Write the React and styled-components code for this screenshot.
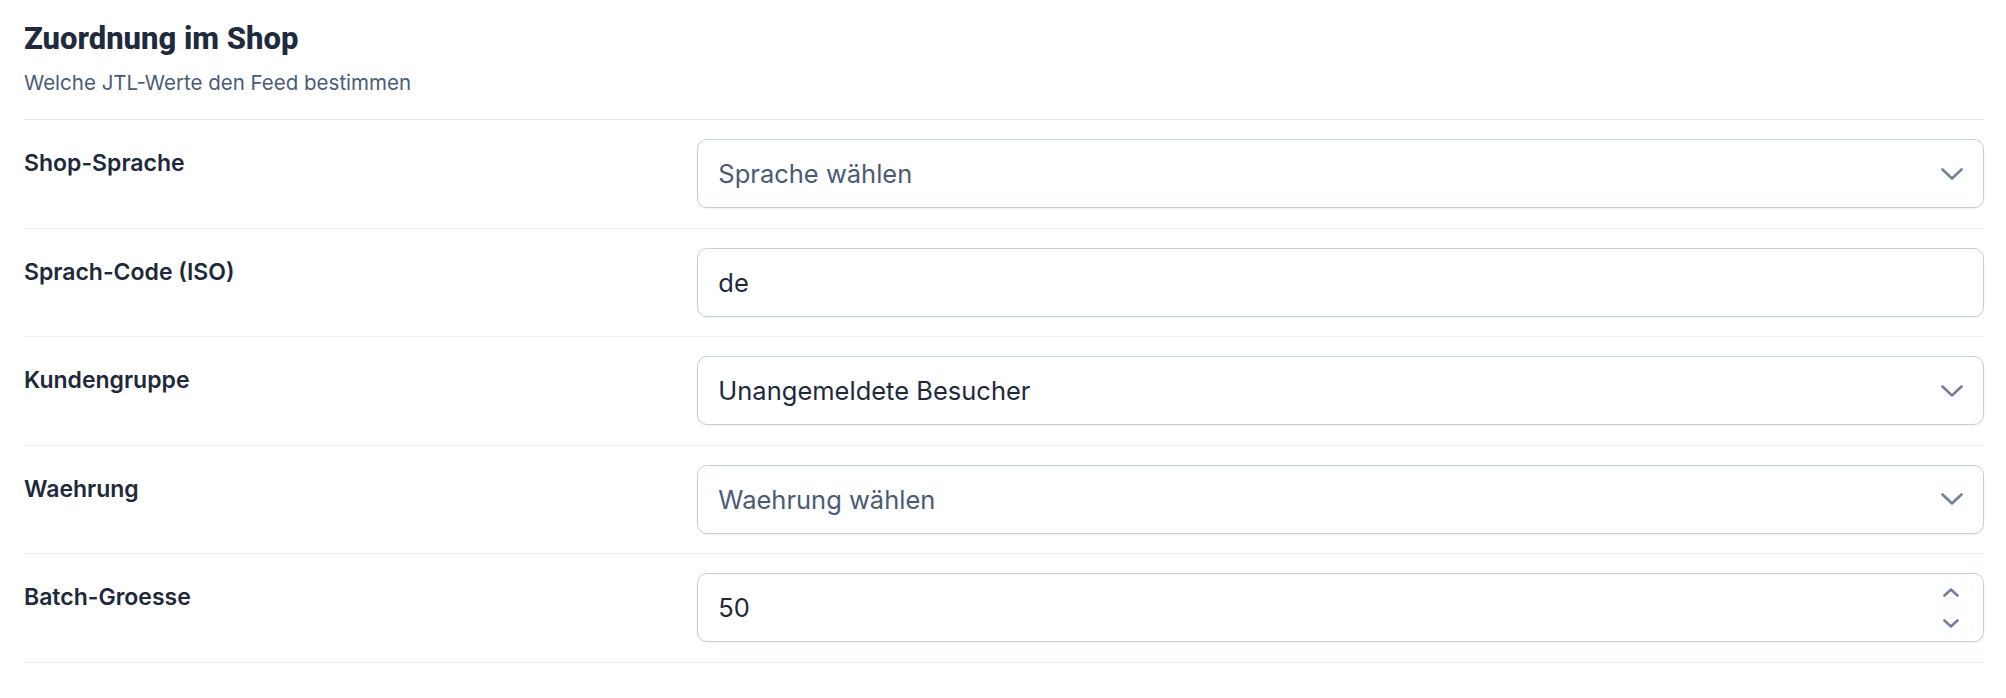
import React from "react";
import styled, { createGlobalStyle } from "styled-components";

const Global = createGlobalStyle`
  * { box-sizing: border-box; }
  html, body { margin: 0; padding: 0; background: #ffffff; }
  body { font-family: Inter, "Noto Sans", sans-serif; color: #1e293b; }
`;

const Page = styled.div`
  padding: 21px 22px 0 24px;
`;

const Header = styled.header`
  display: flex;
  flex-direction: column;
  gap: 12px;
  padding-bottom: 22px;
  border-bottom: 1px solid #e2e6ee;
`;

const Title = styled.h2`
  margin: 0;
  font-family: Roboto, "Open Sans", sans-serif;
  font-stretch: 93%;
  font-weight: 800;
  font-size: 31px;
  line-height: 36px;
  color: #1f2a3d;
`;

const Subtitle = styled.p`
  margin: 0;
  font-size: 20.5px;
  line-height: 28px;
  color: #4b5b76;
`;

const Row = styled.div`
  display: grid;
  grid-template-columns: minmax(0, 1fr) minmax(0, 2fr);
  column-gap: 30px;
  padding: 19px 0 19.5px;
  border-bottom: 1px solid #eef1f5;
`;

const Label = styled.label`
  padding-top: 8px;
  font-size: 23px;
  line-height: 33px;
  font-weight: 600;
  color: #1e293b;
`;

const Field = styled.div`
  display: flex;
  align-items: center;
  height: 69px;
  padding: 0 20px;
  border: 1px solid #c4cfdc;
  border-radius: 10px;
  background: #ffffff;
  box-shadow: 0 1px 2px rgba(15, 23, 42, 0.06);
`;

const Value = styled.span`
  flex: 1;
  font-size: 25.5px;
  color: ${(p) => (p.$placeholder ? "#4b5b76" : "#1e293b")};
  white-space: nowrap;
`;

const Spinner = styled.div`
  display: flex;
  flex-direction: column;
  align-items: center;
  gap: 22px;
  margin-right: 4px;
`;

const Chevron = ({ up = false, w = 22, h = 12 }) => (
  <svg width={w} height={h} viewBox={`0 0 ${w} ${h}`} fill="none">
    <polyline
      points={up ? `1.5,${h - 1.5} ${w / 2},1.5 ${w - 1.5},${h - 1.5}` : `1.5,1.5 ${w / 2},${h - 1.5} ${w - 1.5},1.5`}
      stroke="#718199"
      strokeWidth="2.6"
      strokeLinecap="round"
      strokeLinejoin="round"
    />
  </svg>
);

const rows = [
  { label: "Shop-Sprache", value: "Sprache wählen", kind: "select", placeholder: true },
  { label: "Sprach-Code (ISO)", value: "de", kind: "text" },
  { label: "Kundengruppe", value: "Unangemeldete Besucher", kind: "select" },
  { label: "Waehrung", value: "Waehrung wählen", kind: "select", placeholder: true },
  { label: "Batch-Groesse", value: "50", kind: "number" },
];

export default function App() {
  return (
    <>
      <Global />
      <Page>
        <Header>
          <Title>Zuordnung im Shop</Title>
          <Subtitle>Welche JTL-Werte den Feed bestimmen</Subtitle>
        </Header>
        {rows.map((r) => (
          <Row key={r.label}>
            <Label>{r.label}</Label>
            <Field>
              <Value $placeholder={r.placeholder}>{r.value}</Value>
              {r.kind === "select" && <Chevron />}
              {r.kind === "number" && (
                <Spinner>
                  <Chevron up w={16} h={9} />
                  <Chevron w={16} h={9} />
                </Spinner>
              )}
            </Field>
          </Row>
        ))}
      </Page>
    </>
  );
}
